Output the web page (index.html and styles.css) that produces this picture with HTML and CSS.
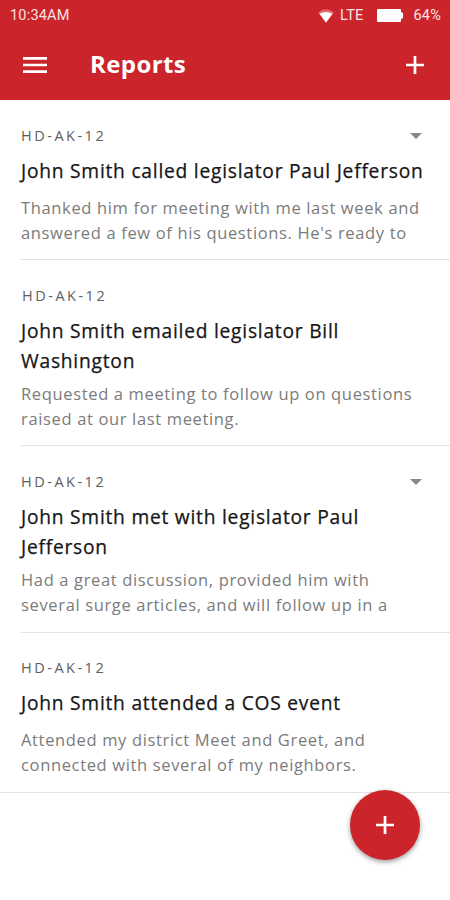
FILE: index.html
```html
<!DOCTYPE html>
<html lang="en">
<head>
  <meta charset="UTF-8" />
  <meta name="viewport" content="width=device-width, initial-scale=1.0" />
  <title>Reports</title>
  <link rel="stylesheet" href="styles.css">
</head>
<body>
  <header class="top">
    <div class="status-bar">
      <span class="time">10:34AM</span>
      <svg class="wifi" width="16" height="14" viewBox="0 0 16 14"><path d="M0 3.500Q8-3 16 3.500L8 14Z" fill="#fff" opacity=".3"/><path d="M1.500 4.800Q8 1 14.500 4.800L8 13.500Z" fill="#fff"/></svg>
      <span class="network">LTE</span>
      <svg class="battery" width="26" height="13" viewBox="0 0 26 13"><path d="M1 0H23Q24 0 24 1V3L26 4V9L24 10V12Q24 13 23 13H1Q0 13 0 12V1Q0 0 1 0Z" fill="#fff"/></svg>
      <span class="percent">64%</span>
    </div>
    <div class="app-bar">
      <svg class="menu-icon" width="24" height="18" viewBox="0 0 24 18"><path d="M0 2.300h24M0 9h24M0 15.700h24" stroke="#fff" stroke-width="2.700"/></svg>
      <h1 class="title">Reports</h1>
      <svg class="add-icon" width="18" height="18" viewBox="0 0 18 18"><path d="M9 0v18M0 9h18" stroke="#fff" stroke-width="2.700"/></svg>
    </div>
  </header>

  <main class="reports">
    <article class="report">
      <div class="district">HD-AK-12 <span class="arrow"></span></div>
      <h2 class="subject">John Smith called legislator Paul Jefferson</h2>
      <p class="notes">Thanked him for meeting with me last week and<br>answered a few of his questions. He's ready to</p>
    </article>
    <article class="report">
      <div class="district shifted">HD-AK-12</div>
      <h2 class="subject two-lines">John Smith emailed legislator Bill<br>Washington</h2>
      <p class="notes">Requested a meeting to follow up on questions<br>raised at our last meeting.</p>
    </article>
    <article class="report third">
      <div class="district">HD-AK-12 <span class="arrow"></span></div>
      <h2 class="subject two-lines">John Smith met with legislator Paul<br>Jefferson</h2>
      <p class="notes">Had a great discussion, provided him with<br>several surge articles, and will follow up in a</p>
    </article>
    <article class="report last">
      <div class="district">HD-AK-12</div>
      <h2 class="subject">John Smith attended a COS event</h2>
      <p class="notes">Attended my district Meet and Greet, and<br>connected with several of my neighbors.</p>
    </article>
  </main>

  <button class="fab" aria-label="Add report">
    <svg width="18" height="18" viewBox="0 0 18 18"><path d="M9 0v18M0 9h18" stroke="#fff" stroke-width="2.700"/></svg>
  </button>
</body>
</html>
```
FILE: styles.css
```css
* {
  box-sizing: border-box;
}

body {
  margin: 0;
  height: 900px;
  background-color: #fff;
  font-family: 'Open Sans', sans-serif;
  font-variant-ligatures: none;
  overflow: hidden;
}

.top {
  height: 100px;
  background-color: #cc242b;
  color: #fff;
}

.status-bar {
  display: flex;
  align-items: center;
  height: 31px;
  padding: 0 9px 0 10px;
  font-family: Roboto, sans-serif;
  font-size: 14.5px;
  color: #fbe3e4;
}

.time {
  letter-spacing: 0.2px;
}

.wifi {
  margin-left: auto;
}

.network {
  margin: 0 14px 0 6px;
  letter-spacing: 0.2px;
}

.percent {
  margin-left: 10px;
  letter-spacing: 0.2px;
}

.app-bar {
  display: flex;
  align-items: center;
  height: 69px;
  padding: 0 26px 1px 23px;
}

.title {
  margin: -3px auto 0 43px;
  font-size: 24px;
  font-weight: 700;
  letter-spacing: 0.4px;
}

.report {
  margin-left: 21px;
  padding-top: 26px;
  padding-bottom: 14px;
  border-bottom: 1px solid #e3e3e3;
}

.third {
  padding-bottom: 15px;
}

.last {
  margin-left: 0;
  padding: 25px 0 15px 21px;
}

.district {
  display: flex;
  align-items: center;
  height: 19px;
  margin-bottom: 11px;
  padding-right: 28px;
  color: #606060;
  font-size: 14.5px;
  letter-spacing: 2.5px;
}

.shifted {
  padding-left: 1px;
}

.arrow {
  margin-left: auto;
  border: 6px solid transparent;
  border-top-color: #888;
  border-bottom: 0;
}

.subject {
  margin: 0 0 9px;
  color: #151515;
  font-size: 19.2px;
  font-weight: 500;
  line-height: 30px;
  letter-spacing: 0.77px;
  white-space: nowrap;
  -webkit-text-stroke: 0.25px #151515;
}

.two-lines {
  margin-bottom: 5px;
}

.notes {
  margin: 0;
  color: #7b7b7b;
  font-size: 16.5px;
  line-height: 25px;
  letter-spacing: 0.65px;
  white-space: nowrap;
}

.fab {
  position: absolute;
  top: 790px;
  left: 350px;
  display: flex;
  align-items: center;
  justify-content: center;
  width: 70px;
  height: 70px;
  padding: 0;
  border: 0;
  border-radius: 50%;
  background-color: #cc242b;
  box-shadow: 0 2px 5px rgba(0, 0, 0, 0.4);
}
```
